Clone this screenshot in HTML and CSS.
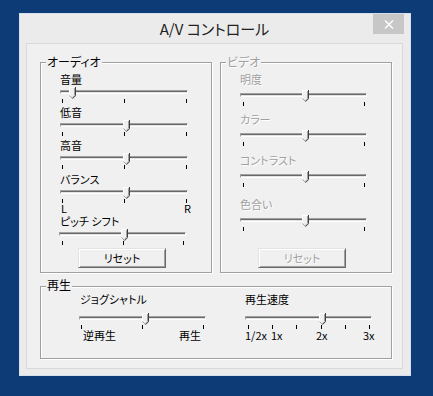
FILE: index.html
```html
<!doctype html>
<html lang="ja">
<head>
<meta charset="utf-8">
<title>A/V コントロール</title>
<link rel="stylesheet" href="styles.css">
</head>
<body>
<svg class="defs">
  <symbol id="thumb" viewBox="0 0 7 12">
    <path d="M0 0H6V8.5L3 11.5 0 8.5Z" fill="#f0f0f0"/>
    <path d="M0.5 8.5V0.5H5.5" fill="none" stroke="#fff"/>
    <path d="M0.5 8.5L3 11" fill="none" stroke="#a0a0a0"/>
    <path d="M5.5 1V8.3L3.2 10.6" fill="none" stroke="#a0a0a0"/>
    <path d="M6.5 0V8.7L3.5 11.7" fill="none" stroke="#404040"/>
  </symbol>
</svg>

<div class="window">
  <div class="titlebar">
    A/V コントロール
    <div class="close">
      <svg width="10" height="9" viewBox="0 0 10 9"><path d="M1 0.5L9 8.5M9 0.5L1 8.5" stroke="#fff" stroke-width="1.4"/></svg>
    </div>
  </div>

  <div class="client">
    <div class="columns">
      <div class="group av">
        <span class="legend">オーディオ</span>

        <div class="lbl">音量</div>
        <div class="slider">
          <div class="groove"></div>
          <svg class="thumb" style="left:9px"><use href="#thumb"/></svg>
          <div class="ticks"><i></i><i></i><i></i></div>
        </div>

        <div class="lbl gap5">低音</div>
        <div class="slider">
          <div class="groove"></div>
          <svg class="thumb" style="left:63px"><use href="#thumb"/></svg>
          <div class="ticks"><i></i><i></i><i></i></div>
        </div>

        <div class="lbl gap5">高音</div>
        <div class="slider">
          <div class="groove"></div>
          <svg class="thumb" style="left:63px"><use href="#thumb"/></svg>
          <div class="ticks"><i></i><i></i><i></i></div>
        </div>

        <div class="lbl gap6">バランス</div>
        <div class="slider">
          <div class="groove"></div>
          <svg class="thumb" style="left:63px"><use href="#thumb"/></svg>
          <div class="ticks"><i></i><i></i><i></i></div>
        </div>
        <div class="lr"><span>L</span><span>R</span></div>

        <div class="lbl gap3">ピッチ シフト</div>
        <div class="slider pitch">
          <div class="groove"></div>
          <svg class="thumb" style="left:62px"><use href="#thumb"/></svg>
          <div class="ticks"><i></i><i></i><i></i></div>
        </div>

        <button class="btn audio-reset">リセット</button>
      </div>

      <div class="group av video">
        <span class="legend">ビデオ</span>

        <div class="lbl">明度</div>
        <div class="slider vs">
          <div class="groove"></div>
          <svg class="thumb" style="left:62px"><use href="#thumb"/></svg>
          <div class="ticks"><i></i><i></i></div>
        </div>

        <div class="lbl gap9">カラー</div>
        <div class="slider vs">
          <div class="groove"></div>
          <svg class="thumb" style="left:62px"><use href="#thumb"/></svg>
          <div class="ticks"><i></i><i></i></div>
        </div>

        <div class="lbl gap10">コントラスト</div>
        <div class="slider vs">
          <div class="groove"></div>
          <svg class="thumb" style="left:62px"><use href="#thumb"/></svg>
          <div class="ticks"><i></i><i></i></div>
        </div>

        <div class="lbl gap13">色合い</div>
        <div class="slider vs">
          <div class="groove"></div>
          <svg class="thumb" style="left:62px"><use href="#thumb"/></svg>
          <div class="ticks"><i></i><i></i></div>
        </div>

        <button class="btn video-reset" disabled>リセット</button>
      </div>
    </div>

    <div class="group play">
      <span class="legend">再生</span>

      <div class="jog">
        <div class="lbl">ジョグシャトル</div>
        <div class="slider">
          <div class="groove"></div>
          <svg class="thumb" style="left:63px"><use href="#thumb"/></svg>
          <div class="ticks"><i></i><i></i><i></i></div>
        </div>
        <div class="scale jog-scale"><span>逆再生</span><span>再生</span></div>
      </div>

      <div class="speed">
        <div class="lbl">再生速度</div>
        <div class="slider">
          <div class="groove"></div>
          <svg class="thumb" style="left:74px"><use href="#thumb"/></svg>
          <div class="ticks"><i></i><i></i><i></i><i></i><i></i><i></i></div>
        </div>
        <div class="scale speed-scale"><span>1/2x</span><span>1x</span><span>2x</span><span>3x</span></div>
      </div>
    </div>
  </div>
</div>
</body>
</html>
```

FILE: styles.css
```css
body {
    margin: 0;
    background: #0d3b76;
    font: 11px/11px "Noto Sans CJK JP", sans-serif;
    font-feature-settings: "palt";
    color: #000;
}
.defs {
    position: absolute;
    width: 0;
    height: 0;
}
.window {
    box-sizing: border-box;
    width: 392px;
    height: 363px;
    margin: 13px 0 0 19px;
    padding: 0 7px 6px 6px;
    display: flex;
    flex-direction: column;
    background: #ebebeb;
    border: 1px solid #d6e0ec;
}
.titlebar {
    position: relative;
    height: 29px;
    line-height: 29px;
    font-size: 15px;
    text-align: center;
    color: #222;
}
.close {
    position: absolute;
    top: 0;
    right: -1px;
    width: 31px;
    height: 20px;
    background: #c7c7c7;
    display: flex;
    align-items: center;
    justify-content: center;
}
.close svg {
    display: block;
}
.client {
    flex: 1;
    box-sizing: border-box;
    background: #f0f0f0;
    border: 1px solid #d9d9d9;
    padding: 18px 0 0 13px;
}
.columns {
    display: flex;
    gap: 8px;
}

/* group boxes */
.group {
    position: relative;
    box-sizing: border-box;
    border: 1px solid #a0a0a0;
    box-shadow: inset 1px 1px #fff, 1px 1px #fff;
}
.group.av {
    width: 172px;
    height: 211px;
    padding: 13px 0 0 19px;
}
.legend {
    position: absolute;
    top: -7px;
    left: 5px;
    height: 12px;
    padding: 0 1px;
    font-size: 12px;
    line-height: 12px;
    background: #f0f0f0;
}
.video .legend,
.video .lbl {
    color: #a0a0a0;
    text-shadow: 1px 1px #fff;
}
.lbl {
    height: 11px;
    line-height: 7px;
    white-space: nowrap;
}
.gap3 { margin-top: 3px; }
.gap5 { margin-top: 5px; }
.gap6 { margin-top: 6px; }
.gap9 { margin-top: 9px; }
.gap10 { margin-top: 10px; }
.gap13 { margin-top: 13px; }

/* trackbars */
.slider {
    position: relative;
    box-sizing: border-box;
    width: 128px;
    height: 17px;
    padding-top: 3px;
}
.groove {
    box-sizing: border-box;
    height: 4px;
    background: #e3e3e3;
    border: 1px solid;
    border-color: #a0a0a0 #fff #fff #a0a0a0;
    box-shadow: inset 0 1px #696969;
}
.thumb {
    position: absolute;
    top: 0;
    width: 7px;
    height: 12px;
}
.ticks {
    display: flex;
    justify-content: space-between;
    height: 4px;
    margin-top: 5px;
    padding: 0 1px 0 2px;
}
.ticks i {
    width: 1px;
    height: 4px;
    background: #000;
}
.slider.pitch {
    width: 127px;
    margin-left: -1px;
}
.pitch .ticks,
.vs .ticks {
    padding: 0 2px 0 3px;
}
.slider.vs {
    width: 127px;
    margin-top: 3px;
}
.lr {
    display: flex;
    justify-content: space-between;
    width: 130px;
    height: 11px;
    line-height: 9px;
    padding-left: 1px;
}

/* buttons */
.btn {
    display: block;
    box-sizing: border-box;
    width: 88px;
    height: 20px;
    margin: 0 0 0 18px;
    padding: 0;
    font: inherit;
    line-height: 16px;
    color: #000;
    background: #f0f0f0;
    border: 1px solid;
    border-color: #e3e3e3 #696969 #696969 #e3e3e3;
    box-shadow: inset 1px 1px #fff, inset -1px -1px #a0a0a0;
}
.audio-reset {
    margin-top: 2px;
}
.video-reset {
    margin-top: 16px;
    color: #a0a0a0;
    text-shadow: 1px 1px #fff;
}

/* playback */
.group.play {
    width: 352px;
    height: 73px;
    margin-top: 13px;
    padding: 9px 0 0 38px;
    display: flex;
    gap: 39px;
}
.play .legend {
    top: -8px;
}
.play .slider {
    width: 127px;
    margin-top: 6px;
}
.jog .lbl {
    margin-left: 1px;
}
.jog .ticks {
    padding: 0 2px;
}
.speed .ticks {
    padding: 0 2px 0 3px;
}
.scale {
    height: 11px;
    line-height: 9px;
    margin-top: 1px;
}
.jog-scale {
    display: flex;
    justify-content: space-between;
    padding: 0 5px 0 4px;
}
.speed-scale {
    display: grid;
    grid-template-columns: 26px 45px 47px auto;
}
```
